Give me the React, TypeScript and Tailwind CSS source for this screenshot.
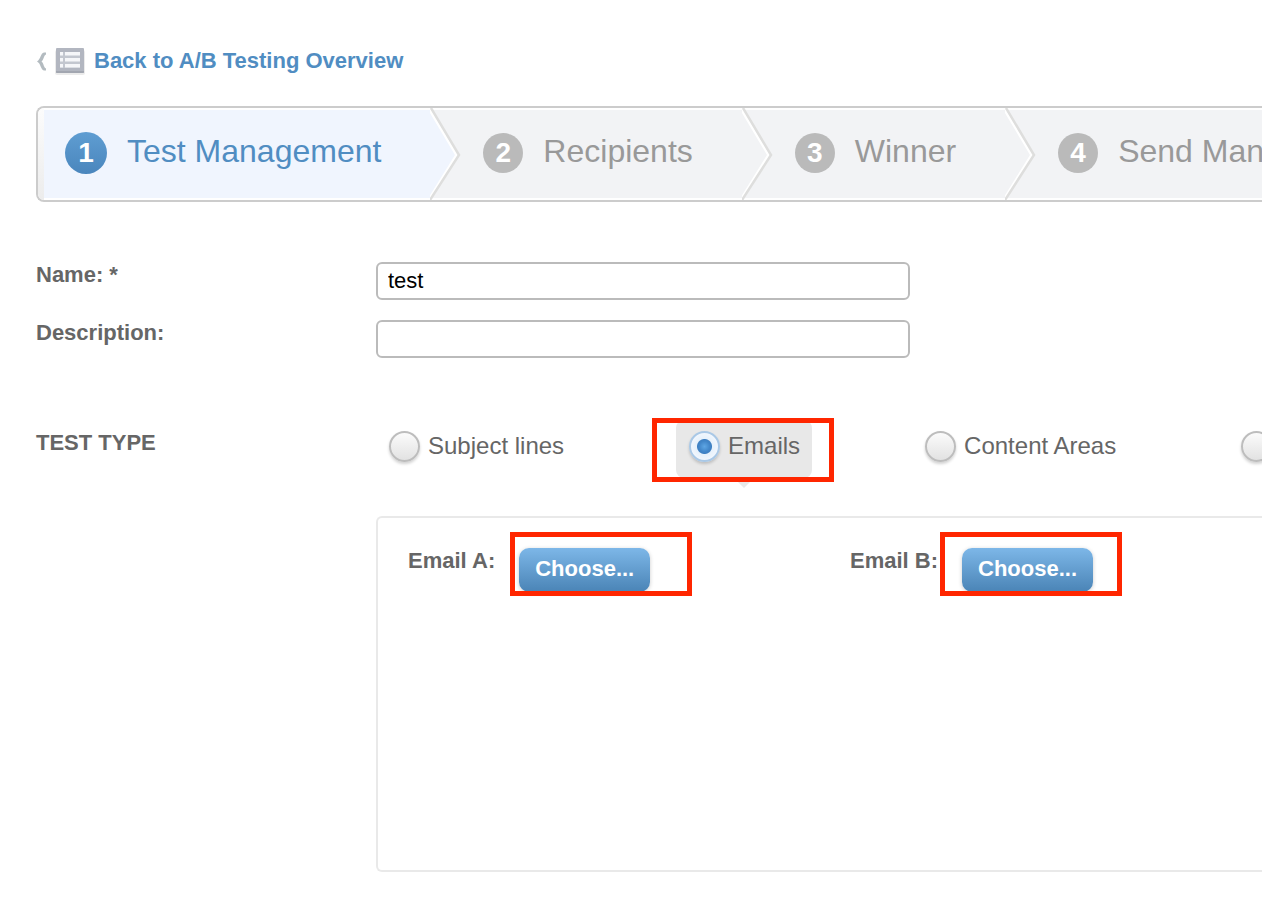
import { useState } from 'react'

const steps = ['Test Management', 'Recipients', 'Winner', 'Send Man']

const testTypes = [
  { id: 'subject', label: 'Subject lines' },
  { id: 'emails', label: 'Emails' },
  { id: 'content', label: 'Content Areas' },
  { id: 'from', label: '' },
]

function BackIcon() {
  return (
    <>
      <svg width="11" height="22" viewBox="0 0 11 22" aria-hidden="true">
        <path d="M10 2.500H8C4.500 3 5 9 1 11.500 5 13.500 4.500 19.500 8 20.500h2v-2C7.500 17.500 8 13.500 5.500 11.500 8 9.500 7.500 5.500 10 4.500z" fill="#b3bbc0" />
      </svg>
      <svg width="30" height="30" viewBox="0 0 30 30" className="ml-2" aria-hidden="true">
        <rect x="0" y="4" width="30" height="25" rx="2" fill="#000" opacity="0.08" />
        <rect x="1" y="2" width="28" height="25" rx="1" fill="#b2b6c0" />
        <path d="M1 25h28v1a1 1 0 0 1-1 1H2a1 1 0 0 1-1-1z" fill="#a2a6b0" />
        <rect x="5" y="6" width="20" height="16" fill="#c3c7cf" />
        <g fill="#f6f7f9">
          <rect x="5" y="6" width="3" height="3.500" />
          <rect x="10" y="6" width="15" height="3.500" />
          <rect x="5" y="12" width="3" height="3.500" />
          <rect x="10" y="12" width="15" height="3.500" />
          <rect x="5" y="18" width="3" height="3.500" />
          <rect x="10" y="18" width="15" height="3.500" />
        </g>
      </svg>
    </>
  )
}

function StepArrow({ active }: { active: boolean }) {
  return (
    <svg width="31" height="92" viewBox="0 0 31 92" className="shrink-0" aria-hidden="true">
      <path d="M0 2H31V90H0z" fill="#f2f3f5" />
      <path d="M0 2H1L28 47 1 90H0z" fill={active ? '#f0f5fe' : '#f2f3f5'} />
      <path d="M-1.500 0L26.500 47-1.500 92" fill="none" stroke="#fff" strokeWidth="2.500" />
      <path d="M1 0L29 47 0 92" fill="none" stroke="#dededd" strokeWidth="2.500" />
    </svg>
  )
}

function Highlight({ className }: { className: string }) {
  return <span className={`pointer-events-none absolute z-10 h-16 w-[182px] border-5 border-[#ff2600] ${className}`} />
}

export default function App() {
  const [name, setName] = useState('test')
  const [description, setDescription] = useState('')
  const [type, setType] = useState('emails')

  return (
    <div className="w-full overflow-hidden bg-white pt-[46px] pb-[30px] pl-9 font-['Liberation_Sans',Arial,sans-serif] text-[22px] leading-6 text-[#666]">
      <a href="#overview" className="flex w-fit items-center font-bold text-[#508dc2]">
        <BackIcon />
        <span className="ml-[9px]">Back to A/B Testing Overview</span>
      </a>

      <ol className="mt-[30px] flex h-24 rounded-l-lg border-y-2 border-l-2 border-[#ccc] bg-white">
        {steps.map((step, i) => (
          <li key={step} className={i === steps.length - 1 ? 'flex min-w-0 flex-1' : 'flex shrink-0'}>
            {i === 0 && <span className="w-[6px] rounded-l-md bg-linear-to-b from-[#fcfcfc] to-[#ececec]" />}
            <a
              href={`#step-${i + 1}`}
              className={`flex flex-1 items-center gap-5 border-y-2 border-white pr-[49px] pb-[2px] text-[32px] leading-9 whitespace-nowrap ${
                i === 0 ? 'bg-[#f0f5fe] pl-[21px] text-[#508dc2]' : 'bg-[#f2f3f5] pl-[22px] text-[#999]'
              }`}
            >
              <span
                className={`flex shrink-0 items-center justify-center rounded-full text-[28px] font-bold text-white ${
                  i === 0 ? 'size-[42px] bg-linear-to-b from-[#5f9dd2] to-[#4a86bd]' : 'size-10 bg-[#bababa]'
                }`}
              >
                {i + 1}
              </span>
              <span className="pb-1">{step}</span>
            </a>
            {i < steps.length - 1 && <StepArrow active={i === 0} />}
          </li>
        ))}
      </ol>

      <form onSubmit={(e) => e.preventDefault()}>
        <div className="mt-[60px] space-y-5">
          <div className="flex items-start">
            <label htmlFor="name" className="w-[340px] shrink-0 pt-px font-bold">Name: *</label>
            <input
              id="name"
              type="text"
              value={name}
              onChange={(e) => setName(e.target.value)}
              className="h-[38px] w-full max-w-[534px] rounded-md border-2 border-[#bbb] bg-white px-[10px] text-black outline-none"
            />
          </div>
          <div className="flex items-start">
            <label htmlFor="description" className="w-[340px] shrink-0 pt-px font-bold">Description:</label>
            <input
              id="description"
              type="text"
              value={description}
              onChange={(e) => setDescription(e.target.value)}
              className="h-[38px] w-full max-w-[534px] rounded-md border-2 border-[#bbb] bg-white px-[10px] text-black outline-none"
            />
          </div>
        </div>

        <div className="mt-[62px] flex items-start">
          <div id="test-type" className="w-[340px] shrink-0 pt-[11px] font-bold">TEST TYPE</div>
          <div className="min-w-0 flex-1">
            <div role="radiogroup" aria-labelledby="test-type" className="flex gap-[100px]">
              {testTypes.map(({ id, label }) => (
                <label
                  key={id}
                  className={`relative flex shrink-0 gap-2 rounded-lg pt-[11px] pr-3 pb-4 pl-[13px] text-2xl leading-[30px] whitespace-nowrap ${
                    type === id ? 'bg-[#e8e8e8]' : ''
                  }`}
                >
                  <input
                    type="radio"
                    name="testType"
                    value={id}
                    aria-label={label || 'From Names'}
                    checked={type === id}
                    onChange={() => setType(id)}
                    className="size-[31px] shrink-0 appearance-none rounded-full border-2 border-[#bdbdbd] bg-linear-to-b from-[#fbfbfb] to-[#e2e2e2] shadow-[0_2px_3px_rgba(0,0,0,0.18)] outline-none checked:border-[#a9c8e6] checked:bg-[radial-gradient(circle_at_50%_50%,#5ea6e4_0px,#4388cb_5px,#3f80c2_7px,#e6f1fb_8px,#f0f6fd_13px)]"
                  />
                  {label}
                  {type === id && (
                    <>
                      <svg width="20" height="10" viewBox="0 0 20 10" className="absolute top-full left-1/2 -translate-x-1/2" aria-hidden="true">
                        <path d="M0 0h20L10 10z" fill="#e8e8e8" />
                      </svg>
                      <Highlight className="-top-[2px] -left-6" />
                    </>
                  )}
                </label>
              ))}
            </div>

            <div className="mt-[38px] flex min-h-[356px] rounded-l-md border-y-2 border-l-2 border-[#e9e9e9] pt-[30px] pl-[30px]">
              {['Email A:', 'Email B:'].map((label, i) => (
                <div key={label} className="flex w-[442px] shrink-0 items-start gap-6 font-bold">
                  <span id={`email-${i}`} className="pt-px">{label}</span>
                  <div className="relative">
                    <button
                      type="button"
                      aria-describedby={`email-${i}`}
                      className="block rounded-[10px] bg-linear-to-b from-[#7db7e8] to-[#4a84b6] px-4 pt-[9px] pb-[11px] font-bold text-white shadow-[0_1px_4px_rgba(0,0,0,0.2)]"
                    >
                      Choose...
                    </button>
                    <Highlight className={i === 0 ? '-top-4 -left-[9px]' : '-top-4 -left-[22px]'} />
                  </div>
                </div>
              ))}
            </div>
          </div>
        </div>
      </form>
    </div>
  )
}
